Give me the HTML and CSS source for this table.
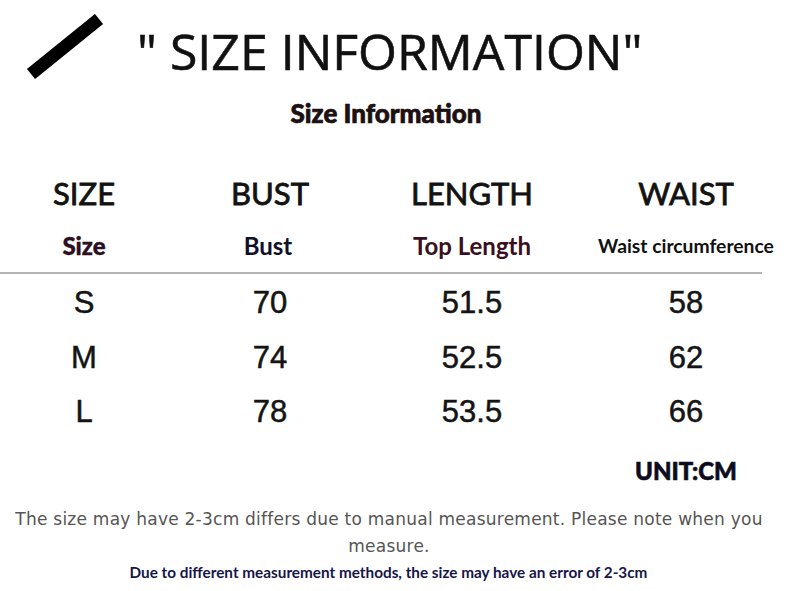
FILE: index.html
```html
<!DOCTYPE html>
<html>
<head>
<meta charset="utf-8">
<link rel="stylesheet" href="styles.css">
</head>
<body>
<div class="page">
  <header class="top">
    <svg class="slash" width="137" height="100" viewBox="0 0 137 100">
      <line x1="31" y1="74" x2="99" y2="19" stroke="#000" stroke-width="13"/>
    </svg>
    <h1 class="title">" SIZE INFORMATION"</h1>
  </header>
  <h2 class="subtitle">Size Information</h2>

  <div class="grid heads">
    <div>SIZE</div><div>BUST</div><div>LENGTH</div><div>WAIST</div>
  </div>
  <div class="grid subs">
    <div class="s-size">Size</div>
    <div class="s-bust">Bust</div>
    <div class="s-len">Top Length</div>
    <div class="s-waist">Waist circumference</div>
  </div>
  <div class="rule"></div>
  <div class="grid data">
    <div>S</div><div>70</div><div>51.5</div><div>58</div>
    <div>M</div><div>74</div><div>52.5</div><div>62</div>
    <div>L</div><div>78</div><div>53.5</div><div>66</div>
  </div>
  <div class="grid unitrow">
    <div></div><div></div><div></div><div class="unit">UNIT:CM</div>
  </div>
  <p class="note">The size may have 2-3cm differs due to manual measurement. Please note when you measure.</p>
  <p class="note2">Due to different measurement methods, the size may have an error of 2-3cm</p>
</div>
</body>
</html>
```

FILE: styles.css
```css
* { box-sizing: border-box; }
html, body { margin: 0; padding: 0; background: #fff; }
.page { width: 800px; height: 591px; overflow: hidden; font-family: "Lato", "Liberation Sans", sans-serif; }

.top { display: flex; height: 100px; margin: 0; }
.slash { flex: none; display: block; }
.title {
  margin: 0;
  font-family: "Open Sans", sans-serif;
  font-weight: 400;
  font-size: 50px;
  line-height: 102px;
  color: #111;
  white-space: nowrap;
  -webkit-text-stroke: 0.6px #111;
}

.subtitle {
  margin: 0;
  height: 26px;
  line-height: 26px;
  text-align: center;
  padding-right: 28px;
  font-size: 26px;
  font-weight: 900;
  color: #1c1012;
  -webkit-text-stroke: 0.7px #1c1012;
}

.grid {
  display: grid;
  grid-template-columns: 168px 204px 200px 228px;
  text-align: center;
}

.heads {
  margin-top: 47px;
  height: 40px;
  line-height: 40px;
  font-size: 31px;
  font-weight: 400;
  color: #121212;
  -webkit-text-stroke: 0.8px #121212;
}

.subs {
  margin-top: 13px;
  height: 40px;
  line-height: 40px;
  font-size: 24px;
}
.s-size { font-weight: 900; color: #2a1020; -webkit-text-stroke: 0.4px #2a1020; }
.s-bust { font-weight: 700; color: #10102a; padding-right: 4px; }
.s-len { font-weight: 700; color: #3a1020; }
.s-waist { font-weight: 700; font-size: 19.3px; color: #111; }

.rule {
  margin-top: 6px;
  width: 762px;
  height: 2px;
  background: #b4b4b4;
}

.data {
  margin-top: 2px;
  grid-auto-rows: 54.5px;
  line-height: 54.5px;
  font-family: "Liberation Sans", sans-serif;
  font-size: 31px;
  color: #141414;
  -webkit-text-stroke: 0.5px #141414;
}

.unitrow {
  margin-top: 16px;
  height: 30px;
  line-height: 30px;
}
.unit { font-weight: 900; font-size: 24px; color: #0c0c20; -webkit-text-stroke: 0.6px #0c0c20; }

.note {
  margin: 20px 0 0 9px;
  width: 760px;
  text-align: center;
  font-family: "DejaVu Sans", sans-serif;
  font-size: 17px;
  letter-spacing: 0.24px;
  line-height: 27px;
  color: #555;
}

.note2 {
  margin: 0;
  height: 25px;
  line-height: 25px;
  text-align: center;
  padding-right: 23px;
  font-weight: 700;
  font-size: 15.3px;
  color: #16164a;
}
```
